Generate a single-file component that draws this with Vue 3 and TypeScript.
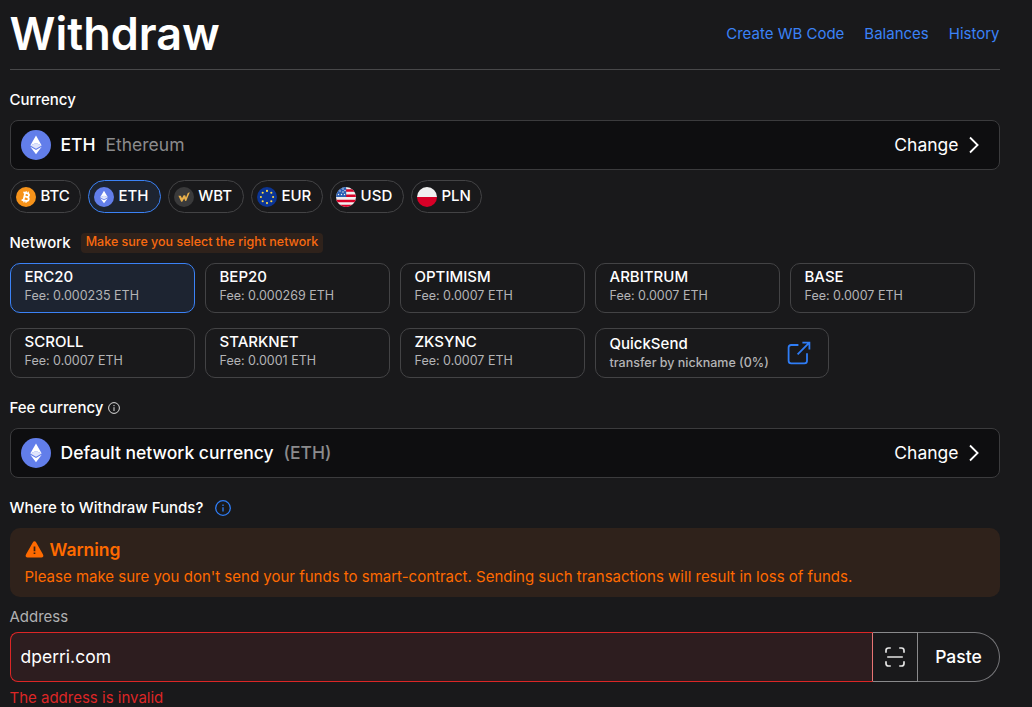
<script setup lang="ts">
import { ref } from 'vue'

interface Network {
  name: string
  fee: string
}

const links: string[] = ['Create WB Code', 'Balances', 'History']
const tickers: string[] = ['BTC', 'ETH', 'WBT', 'EUR', 'USD', 'PLN']
const networks: Network[] = [
  { name: 'ERC20', fee: '0.000235' },
  { name: 'BEP20', fee: '0.000269' },
  { name: 'OPTIMISM', fee: '0.0007' },
  { name: 'ARBITRUM', fee: '0.0007' },
  { name: 'BASE', fee: '0.0007' },
  { name: 'SCROLL', fee: '0.0007' },
  { name: 'STARKNET', fee: '0.0001' },
  { name: 'ZKSYNC', fee: '0.0007' },
]

const activeTicker = ref<string>('ETH')
const activeNetwork = ref<string>('ERC20')
const address = ref<string>('dperri.com')

const stars: { x: number; y: number }[] = Array.from({ length: 8 }, (_, i) => ({
  x: 10 + 6.1 * Math.sin((i * Math.PI) / 4),
  y: 10 - 6.1 * Math.cos((i * Math.PI) / 4),
}))
</script>

<template>
  <main class="page">
    <header class="header">
      <h1 class="title">Withdraw</h1>
      <nav class="links">
        <a v-for="l in links" :key="l">{{ l }}</a>
      </nav>
    </header>

    <h2 class="label label-currency">Currency</h2>
    <div class="select">
      <svg class="coin" viewBox="0 0 30 30">
        <circle cx="15" cy="15" r="15" fill="#627eea" />
        <path d="M15 5.6 L9.3 15.4 L15 13 L20.7 15.4Z" fill="#fff" />
        <path d="M15 13 L9.3 15.4 L15 18.7 L20.7 15.4Z" fill="#dfe4fb" />
        <path d="M9.3 16.7 L15 24.2 L20.7 16.7 L15 20Z" fill="#fff" />
      </svg>
      <span class="main">ETH</span>
      <span class="sub">Ethereum</span>
      <span class="change">Change</span>
      <svg class="chev" viewBox="0 0 10 18"><path d="M1 1.5 L8.6 9 L1 16.5" /></svg>
    </div>

    <div class="chips">
      <button
        v-for="t in tickers"
        :key="t"
        class="chip"
        :class="{ active: t === activeTicker }"
        @click="activeTicker = t"
      >
        <svg v-if="t === 'BTC'" class="flag" viewBox="0 0 20 20">
          <circle cx="10" cy="10" r="10" fill="#f7931a" />
          <g transform="rotate(13 10 10)" fill="none" stroke="#fff" stroke-width="1.8">
            <path d="M6.4 6.2H10.6C13.2 6.2 13.2 9.8 10.6 9.8H8.2M10.6 9.8C14 9.8 14 13.8 10.8 13.8H6.4M8.3 6.2V13.8" />
            <path d="M9 4.3V6M11.2 4.3V6M9 14V15.8M11.2 14V15.8" stroke-width="1.2" />
          </g>
        </svg>
        <svg v-else-if="t === 'ETH'" class="flag" viewBox="0 0 30 30">
          <circle cx="15" cy="15" r="15" fill="#627eea" />
          <path d="M15 5.6 L9.3 15.4 L15 13 L20.7 15.4Z" fill="#fff" />
          <path d="M15 13 L9.3 15.4 L15 18.7 L20.7 15.4Z" fill="#dfe4fb" />
          <path d="M9.3 16.7 L15 24.2 L20.7 16.7 L15 20Z" fill="#fff" />
        </svg>
        <svg v-else-if="t === 'WBT'" class="flag" viewBox="0 0 20 20">
          <circle cx="10" cy="10" r="10" fill="#3a3a3b" />
          <path d="M4.4 8.8H6.8L8 11.2L9.6 8.2H11.2L12 10.4L13.8 6L15.8 5.2L12.2 14H11.2L10.2 11.4L8.2 14.8H7.2Z" fill="#e8b04b" />
        </svg>
        <svg v-else-if="t === 'EUR'" class="flag" viewBox="0 0 20 20">
          <circle cx="10" cy="10" r="10" fill="#0b3596" />
          <circle v-for="(s, i) in stars" :key="i" :cx="s.x" :cy="s.y" r="1.05" fill="#ffda44" />
        </svg>
        <svg v-else-if="t === 'USD'" class="flag us" viewBox="0 0 20 20">
          <rect width="20" height="20" fill="#f0f0f0" />
          <path
            d="M10 3.6H20M10 8.8H20M0 13.9H20M0 19H20"
            stroke="#d80027"
            stroke-width="2.5"
          />
          <rect width="10.2" height="10" fill="#2b5fb4" />
          <g fill="#f0f0f0">
            <circle cx="4" cy="4" r=".7" /><circle cx="7" cy="2" r=".7" /><circle cx="7" cy="5" r=".7" />
            <circle cx="2.5" cy="7.5" r=".7" /><circle cx="5.5" cy="7.5" r=".7" /><circle cx="8.5" cy="7.5" r=".7" />
            <circle cx="9" cy="3.5" r=".7" />
          </g>
        </svg>
        <svg v-else class="flag" viewBox="0 0 20 20">
          <path d="M0 10A10 10 0 0 1 20 10Z" fill="#f0f0f0" />
          <path d="M0 10A10 10 0 0 0 20 10Z" fill="#d80027" />
        </svg>
        <span class="ticker">{{ t }}</span>
      </button>
    </div>

    <div class="network-head">
      <h2 class="label">Network</h2>
      <span class="hint">Make sure you select the right network</span>
    </div>

    <div class="networks">
      <button
        v-for="n in networks"
        :key="n.name"
        class="card"
        :class="{ active: n.name === activeNetwork }"
        @click="activeNetwork = n.name"
      >
        <span class="name">{{ n.name }}</span>
        <span class="fee">Fee: {{ n.fee }} ETH</span>
      </button>
      <button class="card quick">
        <span class="quick-text">
          <span class="name">QuickSend</span>
          <span class="fee">transfer by nickname (0%)</span>
        </span>
        <svg class="ext" viewBox="0 0 24 24">
          <path d="M11.4 4H4.2Q1.6 4 1.6 6.6V19.8Q1.6 22.4 4.2 22.4H17.4Q20 22.4 20 19.8V12.2" />
          <path d="M10.6 13.4L22.3 1.7M15.4 1.6H22.4V8.6" />
        </svg>
      </button>
    </div>

    <h2 class="label label-fee">
      Fee currency
      <svg class="info-small" viewBox="0 0 12 12">
        <circle cx="6" cy="6" r="5.4" /><path d="M6 5.2V9M6 3V4.2" />
      </svg>
    </h2>
    <div class="select">
      <svg class="coin" viewBox="0 0 30 30">
        <circle cx="15" cy="15" r="15" fill="#627eea" />
        <path d="M15 5.6 L9.3 15.4 L15 13 L20.7 15.4Z" fill="#fff" />
        <path d="M15 13 L9.3 15.4 L15 18.7 L20.7 15.4Z" fill="#dfe4fb" />
        <path d="M9.3 16.7 L15 24.2 L20.7 16.7 L15 20Z" fill="#fff" />
      </svg>
      <span class="main raised">Default network currency</span>
      <span class="sub strong">(ETH)</span>
      <span class="change raised">Change</span>
      <svg class="chev" viewBox="0 0 10 18"><path d="M1 1.5 L8.6 9 L1 16.5" /></svg>
    </div>

    <h2 class="label label-where">
      Where to Withdraw Funds?
      <svg class="info-blue" viewBox="0 0 16 16">
        <circle cx="8" cy="8" r="7.3" /><path d="M8 7.2V11.6M8 4.4V5.9" />
      </svg>
    </h2>

    <section class="warning">
      <div class="warning-title">
        <svg viewBox="0 0 18 17">
          <path
            d="M9 .3Q10 .3 10.7 1.5L17.4 13.2Q18.3 14.8 17.6 15.8Q17.1 16.6 16 16.6H2Q.9 16.6 .4 15.8Q-.3 14.8 .6 13.2L7.3 1.5Q8 .3 9 .3Z"
            fill="#ff6a00"
          />
          <path d="M9 5.6V10.2M9 11.5V13.1" stroke="#3a2010" stroke-width="1.7" />
        </svg>
        <strong>Warning</strong>
      </div>
      <p>Please make sure you don't send your funds to smart-contract. Sending such transactions will result in loss of funds.</p>
    </section>

    <div class="address-label">Address</div>
    <div class="address">
      <input v-model="address" class="field" type="text" spellcheck="false" aria-label="Address" />
      <button class="scan" aria-label="Scan">
        <svg viewBox="0 0 20 20">
          <path d="M1 5.8V3.5Q1 1 3.5 1H5.8M14.2 1H16.5Q19 1 19 3.5V5.8M19 14.2V16.5Q19 19 16.5 19H14.2M5.8 19H3.5Q1 19 1 16.5V14.2M2.2 10H17.8" />
        </svg>
      </button>
      <button class="paste">Paste</button>
    </div>
    <div class="error">The address is invalid</div>
  </main>
</template>

<style>
html,
body {
  background: #19191b;
  overflow: hidden;
}
</style>

<style scoped>
.page {
  box-sizing: border-box;
  width: 1032px;
  height: 707px;
  overflow: hidden;
  padding: 0 32px 0 10px;
  background: #19191b;
  color: #fff;
  font-family: Inter, 'Liberation Sans', sans-serif;
  font-size: 15px;
}
.page * {
  box-sizing: border-box;
}
button,
input {
  font: inherit;
  color: inherit;
  margin: 0;
  padding: 0;
  background: none;
  border: 0;
}
svg {
  flex: none;
  display: block;
}
.header {
  display: flex;
  justify-content: space-between;
  height: 70px;
  border-bottom: 1px solid #48484a;
}
.title {
  margin: 0 0 0 -0.5px;
  font-size: 45px;
  font-weight: 600;
  line-height: 68px;
}
.links {
  display: flex;
  gap: 20px;
  padding-right: 0.5px;
  line-height: 68px;
  color: #3b82f6;
}
.label {
  display: flex;
  align-items: center;
  margin: 0 0 0 -0.5px;
  font-size: 15px;
  font-weight: 500;
  line-height: 20px;
}
.label-currency {
  padding: 20px 0 10px;
}
.select {
  display: flex;
  align-items: center;
  height: 50px;
  padding: 0 20px 0 10px;
  border: 1px solid #3b3b3d;
  border-radius: 8px;
  background: #0e0e10;
  font-size: 17.5px;
  line-height: 24px;
}
.coin {
  width: 30px;
  height: 30px;
  margin-right: 9.5px;
}
.main {
  font-weight: 500;
}
.raised {
  padding-bottom: 1px;
}
.sub {
  margin-left: 10px;
  color: #8b8b8d;
}
.sub.strong {
  font-weight: 500;
}
.change {
  margin-left: auto;
}
.chev {
  width: 10px;
  height: 18px;
  margin-left: 10.5px;
  fill: none;
  stroke: #fff;
  stroke-width: 1.8;
}
.chips {
  display: flex;
  gap: 7.4px;
  margin-top: 10px;
}
.chip {
  display: flex;
  align-items: center;
  gap: 4.4px;
  height: 33px;
  padding: 0 10.5px 0 5px;
  border: 1px solid #434345;
  border-radius: 17px;
  font-size: 15px;
  font-weight: 500;
}
.ticker {
  padding-bottom: 2px;
}
.chip.active {
  margin-left: -0.5px;
  padding-right: 11px;
  border-color: #3b82f6;
  background: #1d2431;
}
.flag {
  width: 20px;
  height: 20px;
}
.flag.us {
  border-radius: 50%;
}
.network-head {
  display: flex;
  align-items: center;
  height: 20px;
  margin-top: 20px;
}
.hint {
  height: 20px;
  margin-left: 10px;
  padding: 0 4.5px 0 5px;
  border-radius: 4px;
  background: #2f221b;
  color: #f96a10;
  font-size: 12.5px;
  font-weight: 500;
  line-height: 18px;
}
.networks {
  display: flex;
  flex-wrap: wrap;
  gap: 15px 10px;
  margin-top: 10px;
}
.card {
  display: flex;
  flex-direction: column;
  align-items: flex-start;
  width: 185px;
  height: 50px;
  padding: 3px 13.5px;
  border: 1px solid #434345;
  border-radius: 10px;
  text-align: left;
}
.card.active {
  border-color: #3b82f6;
  background: #1d2431;
}
.name {
  display: block;
  font-size: 15px;
  font-weight: 500;
  line-height: 20px;
}
.fee {
  display: block;
  font-size: 12.5px;
  line-height: 17px;
  color: #b4b4b6;
}
.card.quick {
  flex-direction: row;
  align-items: center;
  justify-content: space-between;
  width: 234px;
  padding-right: 17px;
}
.quick .fee {
  font-weight: 500;
}
.quick-text {
  padding-bottom: 1px;
}
.ext {
  width: 24px;
  height: 24px;
  fill: none;
  stroke: #2f7df6;
  stroke-width: 1.8;
}
.label-fee {
  padding: 20px 0 10px;
}
.info-small {
  width: 12px;
  height: 12px;
  margin-left: 4.5px;
  fill: none;
  stroke: #dcdcdc;
  stroke-width: 1;
}
.label-where {
  padding: 20px 0 10px;
}
.info-blue {
  width: 16px;
  height: 16px;
  margin-left: 12px;
  fill: none;
  stroke: #2f7df6;
  stroke-width: 1.3;
}
.warning {
  height: 69px;
  padding: 9px 14.5px;
  border-radius: 10px;
  background: #2f221b;
  color: #ff6a00;
}
.warning-title {
  display: flex;
  align-items: center;
  gap: 6px;
  height: 25px;
  font-size: 17.5px;
}
.warning-title svg {
  width: 19px;
  height: 17px;
}
.warning-title strong {
  font-weight: 600;
}
.warning p {
  margin: 5px 0 0;
  font-size: 15px;
  line-height: 20px;
  white-space: nowrap;
}
.address-label {
  margin-left: -0.5px;
  padding: 10px 0 5px;
  line-height: 20px;
  color: #b0b0b2;
}
.address {
  display: flex;
  height: 50px;
}
.field {
  flex: 1;
  min-width: 0;
  padding: 0 9.5px 1px;
  border: 1px solid #dc2626;
  border-right-color: #e87474;
  border-radius: 8px 0 0 8px;
  background: #2d1d1f;
  outline: none;
  font-size: 17.5px;
}
.scan {
  display: flex;
  align-items: center;
  justify-content: center;
  width: 45px;
  border: solid #8a8a8c;
  border-width: 1px 1px 1px 0;
}
.scan svg {
  width: 20px;
  height: 20px;
  fill: none;
  stroke: #e4e4e4;
  stroke-width: 1.7;
}
.paste {
  width: 82px;
  padding-bottom: 1px;
  border: solid #77777a;
  border-width: 1px 1px 1px 0;
  border-radius: 0 25px 25px 0;
  font-size: 17.5px;
  font-weight: 500;
}
.error {
  margin: 6px 0 0 -0.5px;
  line-height: 20px;
  color: #dc2626;
}
</style>
